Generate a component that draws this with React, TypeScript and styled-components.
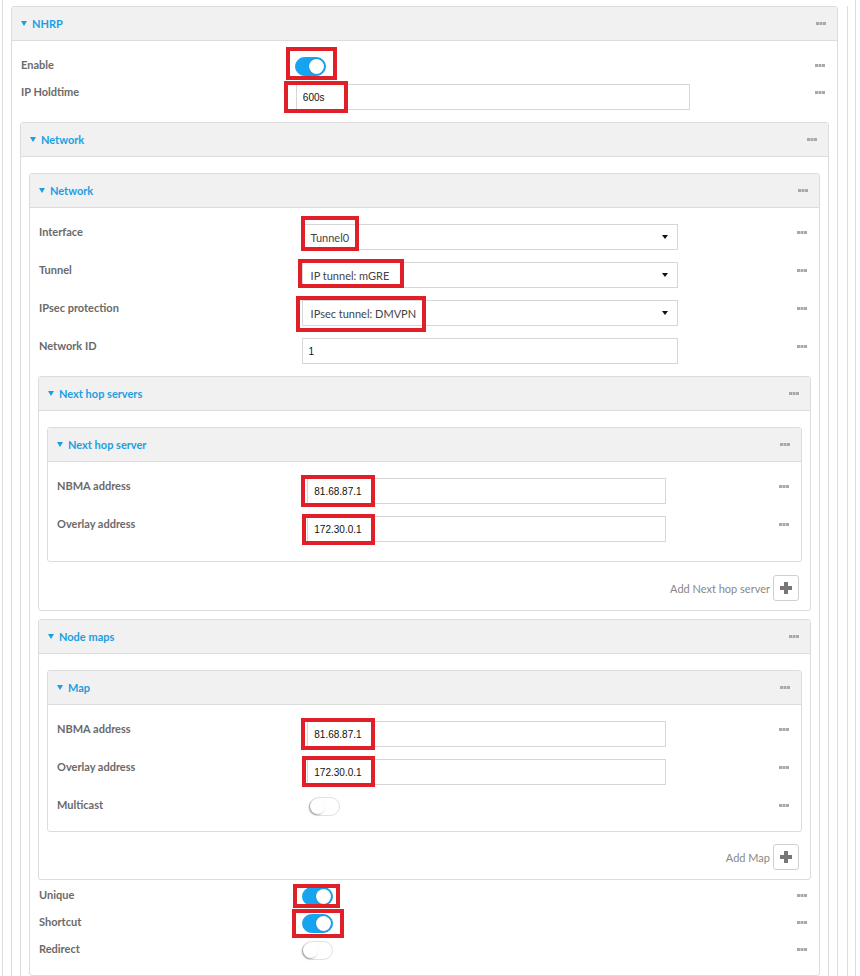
import * as React from 'react';
import styled, { createGlobalStyle } from 'styled-components';

const accent = '#1b9fe2';
const line = '#dcdcdc';
const markRed = '#e11f26';

const GlobalStyle = createGlobalStyle`
    *, *::before, *::after { box-sizing: border-box; }
    html, body { margin: 0; padding: 0; background: #fff; }
    body { font-family: Lato, "Open Sans", sans-serif; }
`;

const Frame = styled.div`
    margin-left: 2px;
    width: 854px;
    border-left: 1px solid ${line};
    border-right: 1px solid ${line};
    padding: 6px 0 0 8px;
`;

const Column = styled.div`
    margin-right: 7px;
    padding-right: 9px;
    border-right: 1px solid ${line};
`;

const Panel = styled.section<{ $after?: number }>`
    border: 1px solid ${line};
    border-radius: 3px;
    background: #fff;
    margin-bottom: ${p => p.$after ?? 9}px;
`;

const Header = styled.div`
    display: flex;
    align-items: center;
    justify-content: space-between;
    height: 34px;
    padding: 0 11px 0 9px;
    background: #f1f1f1;
    border-bottom: 1px solid ${line};
    border-radius: 2px 2px 0 0;
`;

const Title = styled.div`
    display: flex;
    align-items: center;
    gap: 5px;
    color: ${accent};
    font-size: 11px;
    font-weight: 700;
`;

const Caret = styled.span`
    width: 0;
    height: 0;
    border-left: 3.5px solid transparent;
    border-right: 3.5px solid transparent;
    border-top: 5px solid ${accent};
`;

const Body = styled.div`
    padding: 16px 8px 7px;
`;

const Row = styled.div<{ $compact?: boolean }>`
    display: grid;
    grid-template-columns: 34.1% 48.7% 1fr;
    align-items: start;
    margin-bottom: ${p => (p.$compact ? 8 : 12)}px;
`;

const Label = styled.div`
    font-size: 11px;
    font-weight: 700;
    color: #6a6a6a;
    line-height: 16px;
    padding-left: 1px;
`;

const Cell = styled.div`
    position: relative;
    display: flex;
`;

const MoreIcon = styled.svg<{ $header?: boolean }>`
    justify-self: end;
    margin: ${p => (p.$header ? '0' : '7px 4px 0 0')};
    display: block;
`;

const TextBox = styled.input`
    width: 100%;
    height: 26px;
    border: 1px solid #d6d6d6;
    border-radius: 0;
    padding: 0 6px;
    font: 10px "Liberation Sans", Arial, sans-serif;
    color: #111;
    background: #fff;
    outline: none;
`;

const SelectBox = styled.div`
    width: 100%;
    height: 26px;
    border: 1px solid #d6d6d6;
    padding: 0 9px 0 8px;
    display: flex;
    align-items: center;
    justify-content: space-between;
    font-size: 11px;
    color: #444;
`;

const SelectArrow = styled.span`
    width: 0;
    height: 0;
    border-left: 3px solid transparent;
    border-right: 3px solid transparent;
    border-top: 4px solid #111;
`;

const Track = styled.span<{ $on: boolean; $shift?: number }>`
    position: relative;
    display: inline-block;
    width: 31px;
    height: 19px;
    margin-left: ${p => p.$shift ?? 0}px;
    border-radius: 10px;
    background: ${p => (p.$on ? '#16a3f0' : '#fff')};
    border: 1px solid ${p => (p.$on ? '#16a3f0' : '#e0e0e0')};
`;

const Knob = styled.span<{ $on: boolean }>`
    position: absolute;
    top: 1px;
    left: ${p => (p.$on ? 13 : 0)}px;
    width: 15px;
    height: 15px;
    border-radius: 50%;
    background: #fff;
    box-shadow: ${p => (p.$on ? '0 0 1px rgba(0,0,0,0.4)' : '-1px 1px 2px rgba(0,0,0,0.35)')};
`;

const Mark = styled.span<{ $x: number; $y: number; $w: number; $h: number; $t?: number }>`
    position: absolute;
    left: ${p => p.$x}px;
    top: ${p => p.$y}px;
    width: ${p => p.$w}px;
    height: ${p => p.$h}px;
    border: ${p => p.$t ?? 3}px solid ${markRed};
    pointer-events: none;
`;

const AddRow = styled.div`
    display: flex;
    justify-content: flex-end;
    align-items: center;
    gap: 3px;
    padding-right: 3px;
    margin-bottom: 2px;
    font-size: 11px;
    color: #888;
`;

const AddButton = styled.button`
    width: 26px;
    height: 26px;
    padding: 0;
    border: 1px solid #cfcfcf;
    border-radius: 3px;
    background: #fff;
    display: grid;
    place-items: center;
`;

type Box = [number, number, number, number, number?];

function More({ header }: { header?: boolean })
{
    return (
        <MoreIcon $header={header} width="10" height="3" viewBox="0 0 10 3">
            <rect x="0" y="0" width="3" height="3" fill="#a9a9a9" />
            <rect x="3.5" y="0" width="3" height="3" fill="#a9a9a9" />
            <rect x="7" y="0" width="3" height="3" fill="#a9a9a9" />
        </MoreIcon>
    );
}

function Highlight({ box }: { box?: Box })
{
    if (!box) return null;
    const [x, y, w, h, t] = box;
    return <Mark $x={x} $y={y} $w={w} $h={h} $t={t} />;
}

function Section(props: { title: string; after?: number; children: React.ReactNode })
{
    return (
        <Panel $after={props.after}>
            <Header>
                <Title><Caret />{props.title}</Title>
                <More header />
            </Header>
            <Body>{props.children}</Body>
        </Panel>
    );
}

function TextField(props: { label: string; value: string; mark?: Box })
{
    return (
        <Row>
            <Label>{props.label}</Label>
            <Cell>
                <TextBox readOnly defaultValue={props.value} />
                <Highlight box={props.mark} />
            </Cell>
            <More />
        </Row>
    );
}

function SelectField(props: { label: string; value: string; mark?: Box })
{
    return (
        <Row>
            <Label>{props.label}</Label>
            <Cell>
                <SelectBox>
                    <span>{props.value}</span>
                    <SelectArrow />
                </SelectBox>
                <Highlight box={props.mark} />
            </Cell>
            <More />
        </Row>
    );
}

function SwitchField(props: { label: string; on: boolean; shift?: number; mark?: Box })
{
    return (
        <Row $compact>
            <Label>{props.label}</Label>
            <Cell>
                <Track $on={props.on} $shift={props.shift}>
                    <Knob $on={props.on} />
                </Track>
                <Highlight box={props.mark} />
            </Cell>
            <More />
        </Row>
    );
}

function AddItem({ label }: { label: string })
{
    return (
        <AddRow>
            <span>{label}</span>
            <AddButton type="button">
                <svg width="12" height="12" viewBox="0 0 12 12">
                    <rect x="4" y="0" width="4" height="12" fill="#777" />
                    <rect x="0" y="4" width="12" height="4" fill="#777" />
                </svg>
            </AddButton>
        </AddRow>
    );
}

export default function App()
{
    return (
        <>
            <GlobalStyle />
            <Frame>
                <Column>
                    <Section title="NHRP">
                        <SwitchField label="Enable" on shift={-1} mark={[-10, -10, 51, 33, 4]} />
                        <TextField label="IP Holdtime" value="600s" mark={[-12, -3, 64, 32, 4]} />
                        <Section title="Network">
                            <Section title="Network">
                                <SelectField label="Interface" value="Tunnel0" mark={[-1, -8, 58, 35, 4]} />
                                <SelectField label="Tunnel" value="IP tunnel: mGRE" mark={[-4, -3, 106, 29, 4]} />
                                <SelectField label="IPsec protection" value="IPsec tunnel: DMVPN" mark={[-6, -4, 130, 36, 4]} />
                                <TextField label="Network ID" value="1" />
                                <Section title="Next hop servers" after={8}>
                                    <Section title="Next hop server" after={13}>
                                        <TextField label="NBMA address" value="81.68.87.1" mark={[-6, -3, 74, 32, 4]} />
                                        <TextField label="Overlay address" value="172.30.0.1" mark={[-5, -2, 73, 31, 4]} />
                                    </Section>
                                    <AddItem label="Add Next hop server" />
                                </Section>
                                <Section title="Node maps" after={7}>
                                    <Section title="Map" after={12}>
                                        <TextField label="NBMA address" value="81.68.87.1" mark={[-6, -3, 74, 32, 4]} />
                                        <TextField label="Overlay address" value="172.30.0.1" mark={[-5, -3, 73, 31, 4]} />
                                        <SwitchField label="Multicast" on={false} shift={2} />
                                    </Section>
                                    <AddItem label="Add Map" />
                                </Section>
                                <SwitchField label="Unique" on mark={[-9, -3, 47, 24, 4]} />
                                <SwitchField label="Shortcut" on mark={[-10, -5, 52, 29, 4]} />
                                <SwitchField label="Redirect" on={false} />
                            </Section>
                        </Section>
                    </Section>
                </Column>
            </Frame>
        </>
    );
}
